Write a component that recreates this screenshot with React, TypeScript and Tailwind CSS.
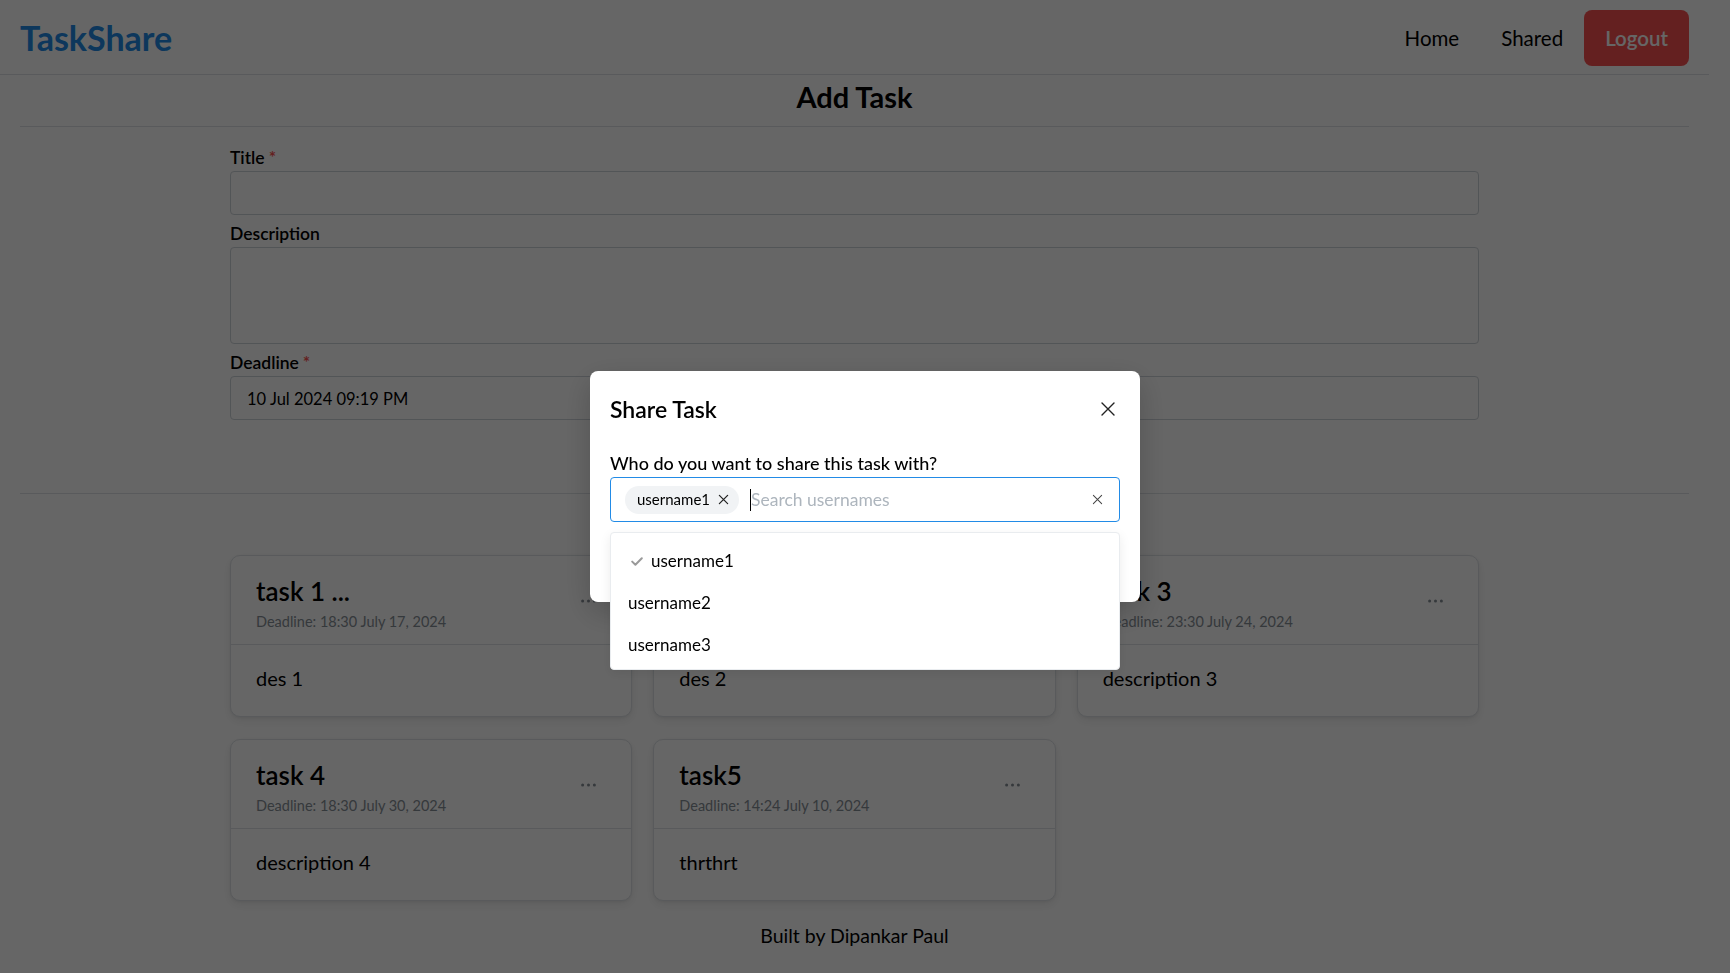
import React from "react";

type Task = { title: string; deadline: string; desc: string };

const tasks: Task[] = [
  { title: "task 1 ...", deadline: "Deadline: 18:30 July 17, 2024", desc: "des 1" },
  { title: "task 2", deadline: "Deadline: 20:00 July 20, 2024", desc: "des 2" },
  { title: "task 3", deadline: "Deadline: 23:30 July 24, 2024", desc: "description 3" },
  { title: "task 4", deadline: "Deadline: 18:30 July 30, 2024", desc: "description 4" },
  { title: "task5", deadline: "Deadline: 14:24 July 10, 2024", desc: "thrthrt" },
];

function Dots() {
  return (
    <svg width="15" height="4" viewBox="0 0 15 4" className="shrink-0">
      <circle cx="1.6" cy="2" r="1.5" fill="#868e96" />
      <circle cx="7.5" cy="2" r="1.5" fill="#868e96" />
      <circle cx="13.4" cy="2" r="1.5" fill="#868e96" />
    </svg>
  );
}

function XIcon({ size, stroke, color }: { size: number; stroke: number; color: string }) {
  return (
    <svg width={size} height={size} viewBox="0 0 16 16" className="shrink-0">
      <path d="M2 2 L14 14 M14 2 L2 14" stroke={color} strokeWidth={stroke} strokeLinecap="round" />
    </svg>
  );
}

function Card({ t }: { t: Task }) {
  return (
    <div className="h-[162px] rounded-[10px] border border-[#dee2e6] bg-white shadow-[0_1px_3px_rgba(0,0,0,0.06),0_4px_10px_rgba(0,0,0,0.07)]">
      <div className="flex h-[89px] items-start justify-between border-b border-[#dee2e6] pl-[25px] pr-[35px]">
        <div className="pt-[20px]">
          <div className="text-[26px] font-semibold leading-[31px] text-black">{t.title}</div>
          <div className="mt-[5px] text-[14.5px] leading-[20px] text-[#868e96]">{t.deadline}</div>
        </div>
        <div className="self-center pt-[2px]">
          <Dots />
        </div>
      </div>
      <div className="pl-[25px] pt-[19px] text-[20px] leading-[28px] text-black">{t.desc}</div>
    </div>
  );
}

function Label({ text, required }: { text: string; required?: boolean }) {
  return (
    <div className="h-[24px] text-[17.5px] font-semibold leading-[26px] text-black">
      {text}
      {required && <span className="ml-[4px] text-[#fa5252]">*</span>}
    </div>
  );
}

export default function App() {
  return (
    <div className="relative min-h-screen bg-white pr-[21px] font-[Lato,'Liberation_Sans',sans-serif] text-black">
      <header className="flex h-[75px] items-center justify-between border-b border-[#dee2e6] px-5 pt-[2px]">
        <div className="text-[34px] font-bold leading-none text-[#228be6]">TaskShare</div>
        <nav className="flex items-center">
          <a className="px-[21px] text-[20.5px] text-black">Home</a>
          <a className="px-[21px] text-[20.5px] text-black">Shared</a>
          <button className="h-[56px] rounded-[8px] bg-[#fa5252] px-[21px] text-[20.5px] font-semibold text-white">
            Logout
          </button>
        </nav>
      </header>

      <main className="px-5">
        <div className="border-b border-[#dee2e6] pb-[11px] pt-[4px] text-center text-[29px] font-bold leading-[36px]">
          Add Task
        </div>

        <div className="mx-auto w-[1249px] pt-[18px]">
          <Label text="Title" required />
          <div className="mt-[2px] h-[44px] rounded-[4px] border border-[#ced4da] bg-white" />
          <div className="mt-[6px]">
            <Label text="Description" />
          </div>
          <div className="mt-[2px] h-[97px] rounded-[4px] border border-[#ced4da] bg-white" />
          <div className="mt-[6px]">
            <Label text="Deadline" required />
          </div>
          <div className="mt-[2px] flex h-[44px] items-center rounded-[4px] border border-[#ced4da] bg-white pl-[16px] pt-[3px] text-[16.5px] text-black">
            10 Jul 2024 09:19 PM
          </div>
        </div>

        <div className="h-[74px] border-b border-[#dee2e6]" />

        <div className="mx-auto mt-[61px] grid w-[1249px] grid-cols-3 gap-x-[21px] gap-y-[22px]">
          {tasks.map((t) => (
            <Card key={t.title} t={t} />
          ))}
        </div>

        <div className="pb-[24px] pt-[21px] text-center text-[19.5px] leading-[27px] text-black">Built by Dipankar Paul</div>
      </main>

      {/* overlay */}
      <div className="fixed inset-0 z-10 bg-black/60" />

      {/* modal */}
      <div className="fixed inset-0 z-20 flex items-center justify-center">
        <div className="relative w-[550px] rounded-[8px] bg-white p-5 shadow-[0_10px_30px_rgba(0,0,0,0.2)]">
          <div className="flex h-[36px] items-center justify-between">
            <div className="text-[23px] font-semibold leading-[36px] text-black">Share Task</div>
            <div className="mr-[4px]">
              <XIcon size={16} stroke={1.4} color="#222" />
            </div>
          </div>
          <div className="mt-[24px] h-[24px] text-[18px] font-medium leading-[24px] text-black">
            Who do you want to share this task with?
          </div>
          <div className="relative mt-[2px]">
            <div className="flex h-[45px] items-center rounded-[4px] border border-[#228be6] pl-[14px] pr-[16px]">
              <div className="flex h-[28px] items-center rounded-full bg-[#f1f3f5] pl-[12px] pr-[10px]">
                <span className="text-[15px] leading-none text-black">username1</span>
                <span className="ml-[8px]">
                  <XIcon size={11} stroke={1.8} color="#222" />
                </span>
              </div>
              <span className="ml-[11px] h-[22px] w-px bg-black" />
              <span className="flex-1 pt-[2px] text-[17.5px] text-[#adb5bd]">Search usernames</span>
              <XIcon size={11} stroke={1.5} color="#444" />
            </div>
            <div className="absolute left-0 right-0 top-[55px] z-30 rounded-[4px] border border-[#e9ecef] bg-white px-[4px] pb-[3px] pt-[7px] shadow-[0_4px_12px_rgba(0,0,0,0.08)]">
              <div className="flex h-[42px] items-center pl-[16px] text-[17px] text-black">
                <svg width="12" height="9" viewBox="0 0 12 9" className="shrink-0">
                  <path d="M1.2 4.6 L4.4 7.8 L10.8 1.2" stroke="#9a9a9a" strokeWidth="2" fill="none" strokeLinecap="round" strokeLinejoin="round" />
                </svg>
                <span className="ml-[8px]">username1</span>
              </div>
              <div className="flex h-[42px] items-center pl-[13px] text-[17px] text-black">username2</div>
              <div className="flex h-[42px] items-center pl-[13px] text-[17px] text-black">username3</div>
            </div>
          </div>
          <div className="h-[60px]" />
        </div>
      </div>
    </div>
  );
}
